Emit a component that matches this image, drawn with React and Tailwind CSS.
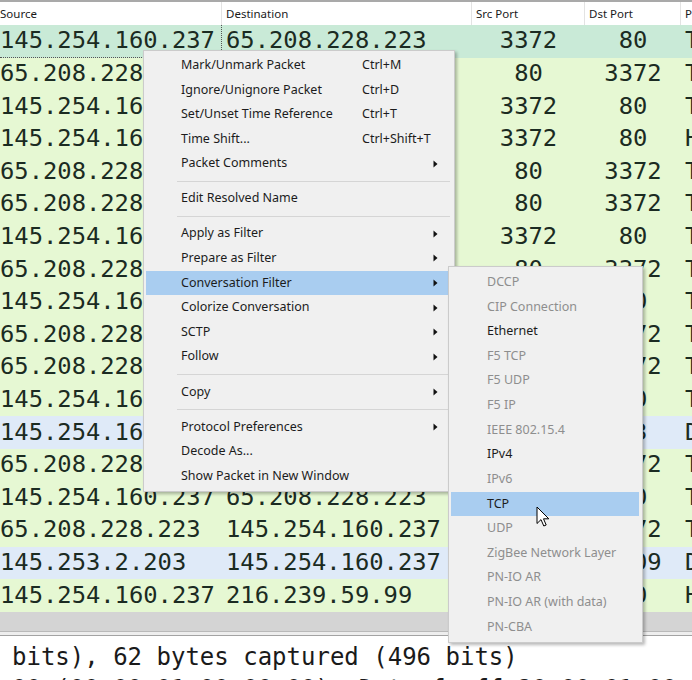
import React from 'react'

const rows = [
  ['145.254.160.237', '65.208.228.223', '3372', '80', 'TCP', 'sel'],
  ['65.208.228.223', '145.254.160.237', '80', '3372', 'TCP', 'tcp'],
  ['145.254.160.237', '65.208.228.223', '3372', '80', 'TCP', 'tcp'],
  ['145.254.160.237', '65.208.228.223', '3372', '80', 'HTTP', 'tcp'],
  ['65.208.228.223', '145.254.160.237', '80', '3372', 'TCP', 'tcp'],
  ['65.208.228.223', '145.254.160.237', '80', '3372', 'TCP', 'tcp'],
  ['145.254.160.237', '65.208.228.223', '3372', '80', 'TCP', 'tcp'],
  ['65.208.228.223', '145.254.160.237', '80', '3372', 'TCP', 'tcp'],
  ['145.254.160.237', '65.208.228.223', '3372', '80', 'TCP', 'tcp'],
  ['65.208.228.223', '145.254.160.237', '80', '3372', 'TCP', 'tcp'],
  ['65.208.228.223', '145.254.160.237', '80', '3372', 'TCP', 'tcp'],
  ['145.254.160.237', '65.208.228.223', '3372', '80', 'TCP', 'tcp'],
  ['145.254.160.237', '145.253.2.203', '3009', '53', 'DNS', 'udp'],
  ['65.208.228.223', '145.254.160.237', '80', '3372', 'TCP', 'tcp'],
  ['145.254.160.237', '65.208.228.223', '3372', '80', 'TCP', 'tcp'],
  ['65.208.228.223', '145.254.160.237', '80', '3372', 'TCP', 'tcp'],
  ['145.253.2.203', '145.254.160.237', '53', '3009', 'DNS', 'udp'],
  ['145.254.160.237', '216.239.59.99', '3371', '80', 'HTTP', 'tcp'],
]

const rowBg = {
  sel: 'bg-[#c9ead7]',
  tcp: 'bg-[#e6f8d3]',
  udp: 'bg-[#dfeaf8]',
}

// main context menu: [label, shortcut, hasSubmenu, active] or 'sep'
const menu = [
  ['Mark/Unmark Packet', 'Ctrl+M'],
  ['Ignore/Unignore Packet', 'Ctrl+D'],
  ['Set/Unset Time Reference', 'Ctrl+T'],
  ['Time Shift...', 'Ctrl+Shift+T'],
  ['Packet Comments', '', true],
  'sep',
  ['Edit Resolved Name', ''],
  'sep',
  ['Apply as Filter', '', true],
  ['Prepare as Filter', '', true],
  ['Conversation Filter', '', true, true],
  ['Colorize Conversation', '', true],
  ['SCTP', '', true],
  ['Follow', '', true],
  'sep',
  ['Copy', '', true],
  'sep',
  ['Protocol Preferences', '', true],
  ['Decode As...', ''],
  ['Show Packet in New Window', ''],
]

// submenu: [label, enabled, active]
const submenu = [
  ['DCCP', false],
  ['CIP Connection', false],
  ['Ethernet', true],
  ['F5 TCP', false],
  ['F5 UDP', false],
  ['F5 IP', false],
  ['IEEE 802.15.4', false],
  ['IPv4', true],
  ['IPv6', false],
  ['TCP', true, true],
  ['UDP', false],
  ['ZigBee Network Layer', false],
  ['PN-IO AR', false],
  ['PN-IO AR (with data)', false],
  ['PN-CBA', false],
]

function Arrow() {
  return (
    <svg width="5" height="8" viewBox="0 0 5 8" className="shrink-0">
      <polygon points="0.5,0.5 4.5,4 0.5,7.5" fill="#111" />
    </svg>
  )
}

function Cursor() {
  return (
    <svg width="14" height="22" viewBox="0 0 14 22" className="absolute left-[536px] top-[506px]">
      <path
        d="M1 1 L1 17.5 L5 13.6 L7.8 20 L10.2 19 L7.5 12.8 L12.8 12.8 Z"
        fill="#fff"
        stroke="#000"
        strokeWidth="1"
        strokeLinejoin="round"
      />
    </svg>
  )
}

export default function App() {
  return (
    <div className="relative w-[692px] h-[680px] overflow-hidden bg-white">
      {/* column header */}
      <div className="flex h-[25px] border-t-2 border-[#a9a9a9] bg-white text-[11.5px] text-[#1a1a1a] font-['Noto_Sans',sans-serif]">
        <div className="w-[222px] shrink-0 flex items-center border-r border-[#e3e3e3]">Source</div>
        <div className="w-[250px] shrink-0 flex items-center pl-[4px] border-r border-[#e3e3e3]">Destination</div>
        <div className="w-[113px] shrink-0 flex items-center pl-[4px] border-r border-[#e3e3e3]">Src Port</div>
        <div className="w-[96px] shrink-0 flex items-center pl-[4px] border-r border-[#e3e3e3]">Dst Port</div>
        <div className="flex-1 flex items-center pl-[4px] whitespace-nowrap">Protocol</div>
      </div>

      {/* packet rows */}
      <div className="font-['DejaVu_Sans_Mono',monospace] text-[23.8px] text-[#1b2b22]">
        {rows.map((r, i) => (
          <div key={i} className={`flex h-[32.6px] items-center whitespace-nowrap ${rowBg[r[5]]}`}>
            <div
              className={`w-[222px] shrink-0 h-full flex items-center overflow-hidden ${
                i === 0 ? 'border-r border-b border-dotted border-[#555]' : ''
              }`}
            >
              {r[0]}
            </div>
            <div className="w-[250px] shrink-0 pl-[4px] overflow-hidden">{r[1]}</div>
            <div className="w-[113px] shrink-0 text-center">{r[2]}</div>
            <div className="w-[96px] shrink-0 text-center">{r[3]}</div>
            <div className="flex-1 pl-[4px] overflow-hidden">{r[4]}</div>
          </div>
        ))}
      </div>

      {/* horizontal scrollbar area + splitter */}
      <div className="h-[20px] bg-[#d4d4d4] border-b border-[#b9b9b9]" />
      <div className="h-[4px] bg-[#eeeeee] border-b border-[#a3a3a3]" />

      {/* packet details */}
      <div className="bg-white pt-[5px] font-['DejaVu_Sans_Mono',monospace] text-[24px] text-[#1a1a1a] whitespace-nowrap">
        <div className="h-[32px] flex items-center pl-[12px]">bits), 62 bytes captured (496 bits)</div>
        <div className="h-[32px] flex items-center pl-[12px]">00 (00:00:01:00:00:00), Dst: fe:ff:20:00:01:00</div>
      </div>

      {/* context menu */}
      <div className="absolute left-[143px] top-[50px] w-[312px] py-[2px] bg-[#f0f0f0] border border-[#cbcbcb] shadow-[2px_2px_3px_rgba(0,0,0,0.28)] font-['Noto_Sans',sans-serif] text-[12.5px] text-[#1c1c1c]">
        {menu.map((m, i) =>
          m === 'sep' ? (
            <div key={i} className="h-[10.5px] flex items-center pl-[33px] pr-[4px]">
              <div className="w-full border-t border-[#d5d5d5]" />
            </div>
          ) : (
            <div
              key={i}
              className={`h-[24.6px] mx-[2px] flex items-center pl-[35px] pr-[14px] whitespace-nowrap ${
                m[3] ? 'bg-[#a9cdf0]' : ''
              }`}
            >
              <span className="w-[181px] shrink-0">{m[0]}</span>
              <span className="flex-1">{m[1]}</span>
              {m[2] && <Arrow />}
            </div>
          )
        )}
      </div>

      {/* conversation filter submenu */}
      <div className="absolute left-[448px] top-[266px] w-[195px] py-[3px] bg-[#f0f0f0] border border-[#cbcbcb] shadow-[2px_2px_3px_rgba(0,0,0,0.28)] font-['Noto_Sans',sans-serif] text-[12.5px]">
        {submenu.map(([label, enabled, active], i) => (
          <div
            key={i}
            className={`h-[24.64px] ml-[2px] mr-[3px] flex items-center pl-[36px] whitespace-nowrap ${
              active ? 'bg-[#a9cdf0]' : ''
            } ${enabled ? 'text-[#1c1c1c]' : 'text-[#8e8e8e]'}`}
          >
            {label}
          </div>
        ))}
      </div>

      <Cursor />
    </div>
  )
}
